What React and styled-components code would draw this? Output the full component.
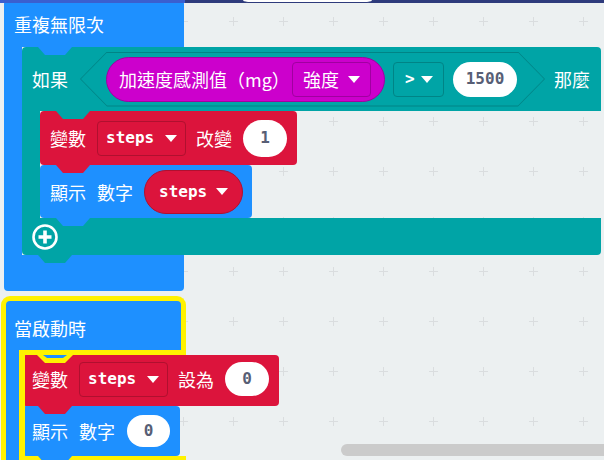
import React from "react";
import styled, { createGlobalStyle, css } from "styled-components";

const C = {
  blue: "#1e90ff",
  teal: "#00a4a6",
  tealDark: "#008486",
  red: "#dc143c",
  redDark: "#b0102f",
  magenta: "#cc00cc",
  magentaDark: "#a000a0",
  yellow: "#fff200",
  bg: "#ecf0f1",
  numText: "#575e75",
};

const Global = createGlobalStyle`
  html, body { margin: 0; padding: 0; background: ${C.bg}; }
  #root { width: 604px; height: 460px; }
`;

const Workspace = styled.div`
  position: relative;
  width: 604px;
  height: 460px;
  overflow: hidden;
  background: ${C.bg};
  color: #fff;
  font-family: "Noto Sans CJK TC", "Noto Sans", sans-serif;
`;

const GridSvg = styled.svg`
  position: absolute;
  left: 0;
  top: 0;
`;

const TopStrip = styled.div`
  position: absolute;
  left: 0;
  top: 0;
  right: 0;
  height: 3px;
  z-index: 10;
  background: linear-gradient(to right, #3a5fcf 0 185px, #2e3b7c 185px);
`;

const SearchTab = styled.div`
  position: absolute;
  left: 238px;
  top: -10px;
  width: 139px;
  height: 13px;
  box-sizing: border-box;
  background: #fff;
  border: 1.5px solid #2e3b7c;
  border-radius: 0 0 10px 10px;
`;

const Scrollbar = styled.div`
  position: absolute;
  left: 341px;
  top: 444px;
  width: 280px;
  height: 12px;
  border-radius: 6px;
  background: #cbcbcb;
  z-index: 10;
`;

/* a top-level block stack placed on the free canvas */
const Stack = styled.div`
  position: absolute;
  left: ${(p) => p.$x}px;
  top: ${(p) => p.$y}px;
  display: flex;
  flex-direction: column;
`;

const CBlock = styled.div`
  display: flex;
  flex-direction: column;
  width: ${(p) => p.$w}px;
`;

const hiHeader = css`
  border: 5px solid ${C.yellow};
  border-bottom: none;
  border-radius: 9px 9px 0 0;
  &::after {
    content: "";
    position: absolute;
    left: 13px;
    right: 0;
    bottom: 0;
    height: 5px;
    background: ${C.yellow};
  }
`;

const CHeader = styled.div`
  position: relative;
  box-sizing: border-box;
  display: flex;
  align-items: center;
  height: ${(p) => p.$h}px;
  padding-left: ${(p) => p.$pl}px;
  background: ${(p) => p.$c};
  border-radius: 4px 4px 0 0;
  ${(p) => p.$hi && hiHeader}
`;

const Mouth = styled.div`
  display: flex;
  align-items: stretch;
`;

const hiArm = css`
  border-left: 5px solid ${C.yellow};
  &::after {
    content: "";
    position: absolute;
    top: -5px;
    bottom: -5px;
    right: -3px;
    width: 6px;
    background: ${C.yellow};
    z-index: 4;
  }
`;

const Arm = styled.div`
  position: relative;
  box-sizing: border-box;
  flex: none;
  width: ${(p) => p.$w}px;
  background: ${(p) => p.$c};
  ${(p) => p.$hi && hiArm}
`;

const Slot = styled.div`
  display: flex;
  flex-direction: column;
  align-items: flex-start;
  flex: 1;
`;

const hiFooter = css`
  border-left: 5px solid ${C.yellow};
  border-right: 5px solid ${C.yellow};
  &::before {
    content: "";
    position: absolute;
    left: 13px;
    right: 0;
    top: 0;
    height: 5px;
    background: ${C.yellow};
  }
`;

const CFooter = styled.div`
  position: relative;
  box-sizing: border-box;
  display: flex;
  align-items: center;
  height: ${(p) => p.$h}px;
  padding-left: ${(p) => p.$pl || 0}px;
  background: ${(p) => p.$c};
  border-radius: 0 0 4px 4px;
  ${(p) => p.$hi && hiFooter}
`;

const Stmt = styled.div`
  position: relative;
  box-sizing: border-box;
  display: flex;
  align-items: center;
  flex: none;
  width: ${(p) => p.$w}px;
  height: ${(p) => p.$h}px;
  padding-left: 10px;
  padding-bottom: ${(p) => p.$pb || 0}px;
  background: ${(p) => p.$c};
  border-radius: 4px;
`;

/* the connection tab below a block, overlapping the next one */
const Tab = styled.span`
  position: absolute;
  top: 100%;
  left: ${(p) => p.$l}px;
  z-index: 3;
  width: ${(p) => p.$w || 34}px;
  height: ${(p) => p.$h || 8}px;
  background: ${(p) => p.$c};
  clip-path: polygon(
    0 0,
    100% 0,
    calc(100% - ${(p) => p.$s || 7}px) 100%,
    ${(p) => p.$s || 7}px 100%
  );
`;

const Label = styled.span`
  flex: none;
  font-size: 18px;
  line-height: 1;
  white-space: nowrap;
  margin-left: ${(p) => p.$ml || 0}px;
`;

const Mono = styled.span`
  font-family: "DejaVu Sans Mono", "Liberation Mono", monospace;
  font-weight: bold;
  font-size: 16px;
  line-height: 1;
  white-space: nowrap;
`;

const Caret = styled.span`
  flex: none;
  width: 0;
  height: 0;
  border-left: 6px solid transparent;
  border-right: 6px solid transparent;
  border-top: 7px solid #fff;
`;

const Dropdown = styled.div`
  box-sizing: border-box;
  flex: none;
  display: flex;
  align-items: center;
  justify-content: space-between;
  width: ${(p) => p.$w}px;
  height: ${(p) => p.$h || 35}px;
  margin-left: ${(p) => (p.$push ? "auto" : `${p.$ml || 0}px`)};
  padding: 0 ${(p) => p.$pr || 9}px 0 ${(p) => p.$pl || 9}px;
  background: ${(p) => p.$c};
  border: 1px solid ${(p) => p.$stroke};
  border-radius: 4px;
`;

const NumPill = styled.div`
  box-sizing: border-box;
  flex: none;
  display: flex;
  align-items: center;
  justify-content: center;
  width: ${(p) => p.$w}px;
  height: ${(p) => p.$h}px;
  margin-left: ${(p) => p.$ml || 0}px;
  border-radius: 999px;
  background: #fff;
  color: ${C.numText};
  font-family: "DejaVu Sans Mono", "Liberation Mono", monospace;
  font-weight: bold;
  font-size: 16px;
  line-height: 1;
`;

const Reporter = styled.div`
  box-sizing: border-box;
  flex: none;
  display: flex;
  align-items: center;
  justify-content: space-between;
  width: 99px;
  height: 44px;
  margin-left: ${(p) => p.$ml || 0}px;
  padding: 0 14px;
  border-radius: 22px;
  background: ${C.red};
  border: 1px solid ${C.redDark};
`;

const HexFrame = styled.div`
  box-sizing: border-box;
  flex: none;
  display: flex;
  width: 465px;
  height: 55px;
  margin-left: ${(p) => p.$ml || 0}px;
  padding: 1px;
  background: ${C.tealDark};
  clip-path: polygon(27px 0, calc(100% - 27px) 0, 100% 50%, calc(100% - 27px) 100%, 27px 100%, 0 50%);
`;

const HexFill = styled.div`
  flex: 1;
  display: flex;
  align-items: center;
  padding-left: 25px;
  background: ${C.teal};
  clip-path: polygon(26px 0, calc(100% - 26px) 0, 100% 50%, calc(100% - 26px) 100%, 26px 100%, 0 50%);
`;

const SensorPill = styled.div`
  box-sizing: border-box;
  flex: none;
  display: flex;
  align-items: center;
  width: 279px;
  height: 45px;
  padding: 0 13px 0 12px;
  border-radius: 23px;
  background: ${C.magenta};
  border: 1px solid ${C.magentaDark};
`;

const PlusSvg = styled.svg`
  flex: none;
  display: block;
`;

const PlusIcon = () => (
  <PlusSvg width="26" height="26" viewBox="0 0 26 26">
    <circle cx="13" cy="13" r="11.5" fill="none" stroke="#fff" strokeWidth="2.6" />
    <path d="M13 6.5v13M6.5 13h13" stroke="#fff" strokeWidth="3.6" />
  </PlusSvg>
);

const Grid = () => (
  <GridSvg width="604" height="460">
    <defs>
      <pattern id="ws-grid" width="50" height="50" patternUnits="userSpaceOnUse" x="8" y="-4">
        <path d="M21 25.5h9M25.5 21v9" stroke="#dadddf" strokeWidth="1" />
      </pattern>
    </defs>
    <rect width="604" height="460" fill="url(#ws-grid)" />
  </GridSvg>
);

export default function App() {
  return (
    <>
      <Global />
      <Workspace>
        <Grid />

        {/* 重複無限次 */}
        <Stack $x={4} $y={0}>
          <CBlock $w={180}>
            <CHeader $c={C.blue} $h={47} $pl={10}>
              <Label>重複無限次</Label>
              <Tab $c={C.blue} $l={34} />
            </CHeader>
            <Mouth>
              <Arm $c={C.blue} $w={18} />
              <Slot>
                <CBlock $w={579}>
                  <CHeader $c={C.teal} $h={64} $pl={10}>
                    <Label>如果</Label>
                    <HexFrame $ml={12}>
                      <HexFill>
                        <SensorPill>
                          <Label>加速度感測值（mg）</Label>
                          <Dropdown $push $w={79} $c={C.magenta} $stroke={C.magentaDark} $pl={10} $pr={10}>
                            <Label>強度</Label>
                            <Caret />
                          </Dropdown>
                        </SensorPill>
                        <Dropdown $ml={8} $w={51} $c={C.teal} $stroke={C.tealDark} $pl={11} $pr={10}>
                          <Mono>&gt;</Mono>
                          <Caret />
                        </Dropdown>
                        <NumPill $ml={9} $w={64} $h={35}>1500</NumPill>
                      </HexFill>
                    </HexFrame>
                    <Label $ml={9}>那麼</Label>
                    <Tab $c={C.teal} $l={34} />
                  </CHeader>
                  <Mouth>
                    <Arm $c={C.teal} $w={18} />
                    <Slot>
                      <Stmt $c={C.red} $w={257} $h={54}>
                        <Label>變數</Label>
                        <Dropdown $ml={11} $w={89} $c={C.red} $stroke={C.redDark} $pl={8} $pr={8}>
                          <Mono>steps</Mono>
                          <Caret />
                        </Dropdown>
                        <Label $ml={10}>改變</Label>
                        <NumPill $ml={11} $w={44} $h={37}>1</NumPill>
                        <Tab $c={C.red} $l={16} />
                      </Stmt>
                      <Stmt $c={C.blue} $w={212} $h={53}>
                        <Label>顯示</Label>
                        <Label $ml={11}>數字</Label>
                        <Reporter $ml={11}>
                          <Mono>steps</Mono>
                          <Caret />
                        </Reporter>
                        <Tab $c={C.blue} $l={16} />
                      </Stmt>
                    </Slot>
                  </Mouth>
                  <CFooter $c={C.teal} $h={37} $pl={10}>
                    <PlusIcon />
                    <Tab $c={C.teal} $l={16} />
                  </CFooter>
                </CBlock>
              </Slot>
            </Mouth>
            <CFooter $c={C.blue} $h={36} />
          </CBlock>
        </Stack>

        {/* 當啟動時 (selected) */}
        <Stack $x={1} $y={296}>
          <CBlock $w={185}>
            <CHeader $c={C.blue} $h={59} $pl={8} $hi>
              <Label>當啟動時</Label>
              <Tab $c={C.yellow} $l={31} $w={36} $s={8} />
              <Tab $c={C.blue} $l={37} $w={24} $h={3} $s={4} />
            </CHeader>
            <Mouth>
              <Arm $c={C.blue} $w={21} $hi />
              <Slot>
                <Stmt $c={C.red} $w={257} $h={51} $pb={3}>
                  <Label>變數</Label>
                  <Dropdown $ml={11} $w={89} $c={C.red} $stroke={C.redDark} $pl={8} $pr={8}>
                    <Mono>steps</Mono>
                    <Caret />
                  </Dropdown>
                  <Label $ml={10}>設為</Label>
                  <NumPill $ml={11} $w={44} $h={34}>0</NumPill>
                  <Tab $c={C.red} $l={16} />
                </Stmt>
                <Stmt $c={C.blue} $w={158} $h={50}>
                  <Label>顯示</Label>
                  <Label $ml={11}>數字</Label>
                  <NumPill $ml={12} $w={43} $h={32}>0</NumPill>
                  <Tab $c={C.blue} $l={16} />
                </Stmt>
              </Slot>
            </Mouth>
            <CFooter $c={C.blue} $h={36} $hi />
          </CBlock>
        </Stack>

        <TopStrip>
          <SearchTab />
        </TopStrip>
        <Scrollbar />
      </Workspace>
    </>
  );
}
